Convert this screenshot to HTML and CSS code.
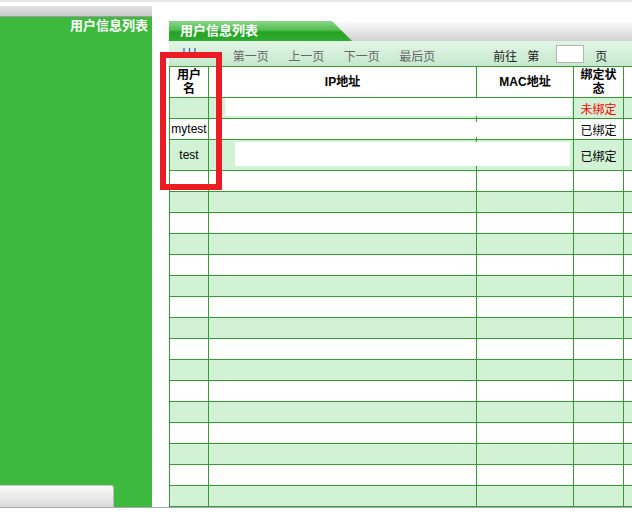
FILE: index.html
```html
<!DOCTYPE html>
<html lang="zh-CN">
<head>
    <meta charset="UTF-8">
    <title>用户信息列表</title>
    <link rel="stylesheet" href="styles.css">
</head>
<body>
    <div class="frame">
        <aside class="side">
            <div class="side-head"></div>
            <div class="side-body">
                <div class="side-title">用户信息列表</div>
                <div class="side-btn"></div>
            </div>
        </aside>

        <main class="main">
            <div class="tabbar">
                <div class="tab">用户信息列表</div>
            </div>

            <div class="toolbar">
                <svg class="pg-icon" width="13" height="9" viewBox="0 0 13 9">
                    <path d="M1 0v9M6.5 0v9M12 0v9" stroke="#2f63b8" stroke-width="1.2" fill="none"/>
                    <path d="M1 4.5h11" stroke="#b89a4a" stroke-width="1" fill="none"/>
                </svg>
                <span class="pg-link first">第一页</span>
                <span class="pg-link">上一页</span>
                <span class="pg-link">下一页</span>
                <span class="pg-link">最后页</span>
                <span class="goto">前往</span>
                <span class="goto-no">第</span>
                <input class="goto-input" type="text">
                <span class="goto-unit">页</span>
            </div>

            <table class="grid">
                <colgroup>
                    <col style="width:39px">
                    <col style="width:268px">
                    <col style="width:97px">
                    <col style="width:50px">
                    <col style="width:66px">
                </colgroup>
                <thead>
                    <tr>
                        <th><div class="wrap">用户名</div></th>
                        <th>IP地址</th>
                        <th>MAC地址</th>
                        <th><div class="wrap wide">绑定状态</div></th>
                        <th></th>
                    </tr>
                </thead>
                <tbody>
                    <tr>
                        <td></td>
                        <td class="ip"><div class="field field-a"></div></td>
                        <td></td>
                        <td class="unbound">未绑定</td>
                        <td></td>
                    </tr>
                    <tr>
                        <td>mytest</td>
                        <td class="ip"><div class="field field-b"></div></td>
                        <td></td>
                        <td>已绑定</td>
                        <td></td>
                    </tr>
                    <tr class="tall">
                        <td>test</td>
                        <td class="ip"><div class="field field-c"></div></td>
                        <td></td>
                        <td>已绑定</td>
                        <td></td>
                    </tr>
                    <tr><td></td><td></td><td></td><td></td><td></td></tr>
                    <tr><td></td><td></td><td></td><td></td><td></td></tr>
                    <tr><td></td><td></td><td></td><td></td><td></td></tr>
                    <tr><td></td><td></td><td></td><td></td><td></td></tr>
                    <tr><td></td><td></td><td></td><td></td><td></td></tr>
                    <tr><td></td><td></td><td></td><td></td><td></td></tr>
                    <tr><td></td><td></td><td></td><td></td><td></td></tr>
                    <tr><td></td><td></td><td></td><td></td><td></td></tr>
                    <tr><td></td><td></td><td></td><td></td><td></td></tr>
                    <tr><td></td><td></td><td></td><td></td><td></td></tr>
                    <tr><td></td><td></td><td></td><td></td><td></td></tr>
                    <tr><td></td><td></td><td></td><td></td><td></td></tr>
                    <tr><td></td><td></td><td></td><td></td><td></td></tr>
                    <tr><td></td><td></td><td></td><td></td><td></td></tr>
                    <tr><td></td><td></td><td></td><td></td><td></td></tr>
                    <tr><td></td><td></td><td></td><td></td><td></td></tr>
                </tbody>
            </table>
        </main>
    </div>

    <div class="mark"></div>
</body>
</html>
```

FILE: styles.css
```css
body {
    margin: 0;
    position: relative;
    height: 527px;
    overflow: hidden;
    border-top: 2px solid #e6e6e6;
    background-color: #fff;
    color: #000;
    font-family: "Liberation Sans", "Noto Sans CJK SC", sans-serif;
    font-size: 12px;
}
.frame {
    display: flex;
    height: 505px;
    border-bottom: 1px solid #a9a9a9;
}

/* left menu */
.side {
    width: 152px;
    flex: none;
    margin-top: 4px;
    display: flex;
    flex-direction: column;
}
.side-head {
    height: 10px;
    background: linear-gradient(#e4e4e4, #cbcbcb);
    border-bottom: 1px solid #9c9c9c;
}
.side-body {
    flex: 1;
    background-color: #3db93d;
    display: flex;
    flex-direction: column;
    justify-content: space-between;
}
.side-title {
    color: #fff;
    font-weight: bold;
    font-size: 13px;
    line-height: 17px;
    text-align: right;
    padding-right: 4px;
}
.side-btn {
    width: 113px;
    height: 21px;
    background: linear-gradient(#fbfbfb, #dadada);
    border-top: 1px solid #c8c8c8;
    border-right: 1px solid #bdbdbd;
    border-top-right-radius: 3px;
}

/* main area */
.main {
    flex: 1;
    min-width: 0;
    margin-left: 17px;
    margin-top: 19px;
    overflow: hidden;
}
.tabbar {
    height: 20px;
    background: linear-gradient(#fdfdfd, #d0d0d0);
}
.tab {
    width: 183px;
    height: 20px;
    box-sizing: border-box;
    padding-left: 11px;
    clip-path: polygon(0 0, 163px 0, 183px 100%, 0 100%);
    background: linear-gradient(#8ad58a, #52bf52 45%, #23a223 55%, #30ad30);
    color: #fff;
    font-weight: bold;
    font-size: 13px;
    line-height: 20px;
}
.toolbar {
    height: 25px;
    box-sizing: border-box;
    padding: 3px 0 0 14px;
    display: flex;
    align-items: center;
    background: linear-gradient(#e3f5e6, #c5e9cc);
    color: #666;
    white-space: nowrap;
}
.pg-icon {
    flex: none;
    margin-top: -6px;
}
.pg-link {
    margin-left: 19.5px;
}
.pg-link.first {
    margin-left: 36.7px;
}
.goto {
    margin-left: 58px;
    color: #222;
}
.goto-no {
    margin-left: 10px;
    color: #222;
}
.goto-input {
    width: 28px;
    height: 18px;
    box-sizing: border-box;
    margin: -3px 0 0 17px;
    padding: 0;
    border: 1px solid #b4b4b4;
    background-color: #fff;
}
.goto-unit {
    margin-left: 11px;
    color: #222;
}

/* user table */
.grid {
    width: 520px;
    table-layout: fixed;
    border-collapse: collapse;
}
.grid th,
.grid td {
    border: 1px solid #369b36;
    padding: 0;
    height: 20px;
    text-align: center;
    vertical-align: middle;
    overflow: visible;
}
.grid th {
    height: 30px;
    font-weight: bold;
    line-height: 14px;
    background-color: #fff;
}
.wrap {
    width: 26px;
    margin: 0 auto;
}
.wrap.wide {
    width: 39px;
}
.grid tbody tr:nth-child(odd) td {
    background-color: #d1f2d4;
}
.grid tbody tr:nth-child(even) td {
    background-color: #fff;
}
.grid tr.tall td {
    height: 30px;
}
.unbound {
    color: #f00;
}
.ip {
    position: relative;
}
.field {
    position: absolute;
    background-color: #fff;
    z-index: 1;
}
.field-a {
    left: 16px;
    top: 0;
    width: 347px;
    height: 18px;
}
.field-b {
    left: 2px;
    top: 3px;
    width: 361px;
    height: 15px;
}
.field-c {
    left: 26px;
    top: 2px;
    width: 335px;
    height: 24px;
}

/* red annotation frame */
.mark {
    position: absolute;
    left: 160px;
    top: 50px;
    width: 62px;
    height: 138px;
    box-sizing: border-box;
    border: 6px solid #ed1c24;
    z-index: 5;
}
```
